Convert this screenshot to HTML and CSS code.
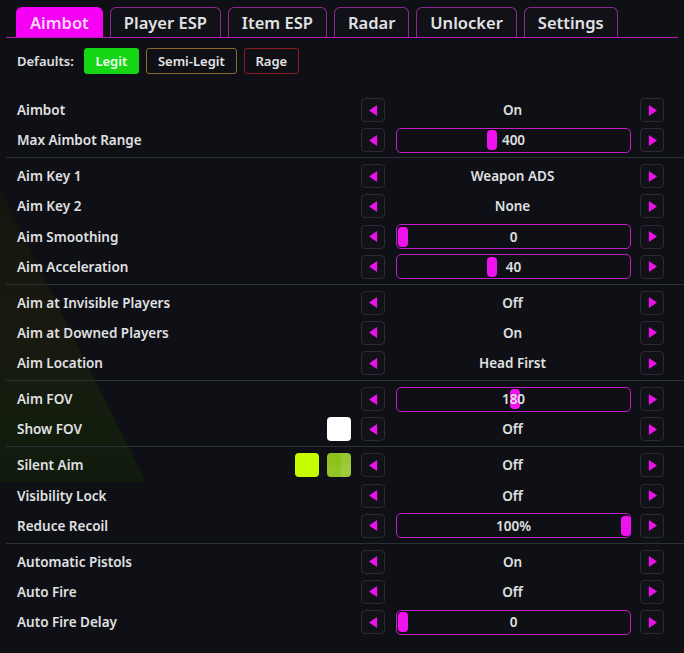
FILE: index.html
```html
<!DOCTYPE html>
<html lang="en">
<head>
    <meta charset="UTF-8">
    <title>Aimbot Menu</title>
    <link rel="stylesheet" href="styles.css">
</head>
<body>

    <!-- faint game scene showing through -->
    <div class="backdrop"></div>

    <div class="menu">
        <!-- Tabs -->
        <div class="tabs">
            <a href="#" class="tab active">Aimbot</a>
            <a href="#" class="tab">Player ESP</a>
            <a href="#" class="tab">Item ESP</a>
            <a href="#" class="tab">Radar</a>
            <a href="#" class="tab">Unlocker</a>
            <a href="#" class="tab">Settings</a>
        </div>

        <!-- Presets -->
        <div class="defaults">
            <span class="defaults-label">Defaults:</span>
            <button class="preset legit">Legit</button>
            <button class="preset semi">Semi-Legit</button>
            <button class="preset rage">Rage</button>
        </div>

        <div class="options">
            <div class="row">
                <span class="label">Aimbot</span><span></span>
                <button class="arrow left"><svg viewBox="0 0 10 12"><polygon points="0,6 9,0 9,12"/></svg></button>
                <div class="value">On</div>
                <button class="arrow right"><svg viewBox="0 0 10 12"><polygon points="10,6 1,0 1,12"/></svg></button>
            </div>
            <div class="row">
                <span class="label">Max Aimbot Range</span><span></span>
                <button class="arrow left"><svg viewBox="0 0 10 12"><polygon points="0,6 9,0 9,12"/></svg></button>
                <div class="value"><div class="slider"><span class="thumb" style="left: calc(0.4 * (100% - 10px))"></span><span class="slider-text">400</span></div></div>
                <button class="arrow right"><svg viewBox="0 0 10 12"><polygon points="10,6 1,0 1,12"/></svg></button>
            </div>

            <hr>

            <div class="row">
                <span class="label">Aim Key 1</span><span></span>
                <button class="arrow left"><svg viewBox="0 0 10 12"><polygon points="0,6 9,0 9,12"/></svg></button>
                <div class="value">Weapon ADS</div>
                <button class="arrow right"><svg viewBox="0 0 10 12"><polygon points="10,6 1,0 1,12"/></svg></button>
            </div>
            <div class="row">
                <span class="label">Aim Key 2</span><span></span>
                <button class="arrow left"><svg viewBox="0 0 10 12"><polygon points="0,6 9,0 9,12"/></svg></button>
                <div class="value">None</div>
                <button class="arrow right"><svg viewBox="0 0 10 12"><polygon points="10,6 1,0 1,12"/></svg></button>
            </div>
            <div class="row">
                <span class="label">Aim Smoothing</span><span></span>
                <button class="arrow left"><svg viewBox="0 0 10 12"><polygon points="0,6 9,0 9,12"/></svg></button>
                <div class="value"><div class="slider"><span class="thumb" style="left: 0"></span><span class="slider-text">0</span></div></div>
                <button class="arrow right"><svg viewBox="0 0 10 12"><polygon points="10,6 1,0 1,12"/></svg></button>
            </div>
            <div class="row">
                <span class="label">Aim Acceleration</span><span></span>
                <button class="arrow left"><svg viewBox="0 0 10 12"><polygon points="0,6 9,0 9,12"/></svg></button>
                <div class="value"><div class="slider"><span class="thumb" style="left: calc(0.4 * (100% - 10px))"></span><span class="slider-text">40</span></div></div>
                <button class="arrow right"><svg viewBox="0 0 10 12"><polygon points="10,6 1,0 1,12"/></svg></button>
            </div>

            <hr>

            <div class="row">
                <span class="label">Aim at Invisible Players</span><span></span>
                <button class="arrow left"><svg viewBox="0 0 10 12"><polygon points="0,6 9,0 9,12"/></svg></button>
                <div class="value">Off</div>
                <button class="arrow right"><svg viewBox="0 0 10 12"><polygon points="10,6 1,0 1,12"/></svg></button>
            </div>
            <div class="row">
                <span class="label">Aim at Downed Players</span><span></span>
                <button class="arrow left"><svg viewBox="0 0 10 12"><polygon points="0,6 9,0 9,12"/></svg></button>
                <div class="value">On</div>
                <button class="arrow right"><svg viewBox="0 0 10 12"><polygon points="10,6 1,0 1,12"/></svg></button>
            </div>
            <div class="row">
                <span class="label">Aim Location</span><span></span>
                <button class="arrow left"><svg viewBox="0 0 10 12"><polygon points="0,6 9,0 9,12"/></svg></button>
                <div class="value">Head First</div>
                <button class="arrow right"><svg viewBox="0 0 10 12"><polygon points="10,6 1,0 1,12"/></svg></button>
            </div>

            <hr>

            <div class="row">
                <span class="label">Aim FOV</span><span></span>
                <button class="arrow left"><svg viewBox="0 0 10 12"><polygon points="0,6 9,0 9,12"/></svg></button>
                <div class="value"><div class="slider"><span class="thumb" style="left: calc(0.5 * (100% - 10px))"></span><span class="slider-text">180</span></div></div>
                <button class="arrow right"><svg viewBox="0 0 10 12"><polygon points="10,6 1,0 1,12"/></svg></button>
            </div>
            <div class="row">
                <span class="label">Show FOV</span>
                <div class="swatches"><span class="swatch white"></span></div>
                <button class="arrow left"><svg viewBox="0 0 10 12"><polygon points="0,6 9,0 9,12"/></svg></button>
                <div class="value">Off</div>
                <button class="arrow right"><svg viewBox="0 0 10 12"><polygon points="10,6 1,0 1,12"/></svg></button>
            </div>

            <hr>

            <div class="row">
                <span class="label">Silent Aim</span>
                <div class="swatches"><span class="swatch lime"></span><span class="swatch lime-alpha"></span></div>
                <button class="arrow left"><svg viewBox="0 0 10 12"><polygon points="0,6 9,0 9,12"/></svg></button>
                <div class="value">Off</div>
                <button class="arrow right"><svg viewBox="0 0 10 12"><polygon points="10,6 1,0 1,12"/></svg></button>
            </div>
            <div class="row">
                <span class="label">Visibility Lock</span><span></span>
                <button class="arrow left"><svg viewBox="0 0 10 12"><polygon points="0,6 9,0 9,12"/></svg></button>
                <div class="value">Off</div>
                <button class="arrow right"><svg viewBox="0 0 10 12"><polygon points="10,6 1,0 1,12"/></svg></button>
            </div>
            <div class="row">
                <span class="label">Reduce Recoil</span><span></span>
                <button class="arrow left"><svg viewBox="0 0 10 12"><polygon points="0,6 9,0 9,12"/></svg></button>
                <div class="value"><div class="slider"><span class="thumb" style="left: calc(100% - 10px)"></span><span class="slider-text">100%</span></div></div>
                <button class="arrow right"><svg viewBox="0 0 10 12"><polygon points="10,6 1,0 1,12"/></svg></button>
            </div>

            <hr>

            <div class="row">
                <span class="label">Automatic Pistols</span><span></span>
                <button class="arrow left"><svg viewBox="0 0 10 12"><polygon points="0,6 9,0 9,12"/></svg></button>
                <div class="value">On</div>
                <button class="arrow right"><svg viewBox="0 0 10 12"><polygon points="10,6 1,0 1,12"/></svg></button>
            </div>
            <div class="row">
                <span class="label">Auto Fire</span><span></span>
                <button class="arrow left"><svg viewBox="0 0 10 12"><polygon points="0,6 9,0 9,12"/></svg></button>
                <div class="value">Off</div>
                <button class="arrow right"><svg viewBox="0 0 10 12"><polygon points="10,6 1,0 1,12"/></svg></button>
            </div>
            <div class="row">
                <span class="label">Auto Fire Delay</span><span></span>
                <button class="arrow left"><svg viewBox="0 0 10 12"><polygon points="0,6 9,0 9,12"/></svg></button>
                <div class="value"><div class="slider"><span class="thumb" style="left: 0"></span><span class="slider-text">0</span></div></div>
                <button class="arrow right"><svg viewBox="0 0 10 12"><polygon points="10,6 1,0 1,12"/></svg></button>
            </div>
        </div>
    </div>

</body>
</html>
```

FILE: styles.css
```css
body {
    margin: 0;
    padding: 0;
    background-color: #0e1015;
    font-family: "Noto Sans", "Open Sans", sans-serif;
    font-weight: 600;
    color: #e0e0e2;
    height: 653px;
    overflow: hidden;
    position: relative;
}

/* Background art bleeding through the menu */
.backdrop {
    position: absolute;
    left: 0;
    top: 190px;
    width: 146px;
    height: 292px;
    clip-path: polygon(0 0, 100% 100%, 0 100%);
    background: linear-gradient(to bottom, #15150f 0%, #19190f 50%, #131d0e 78%, #111b0d 100%);
    z-index: 0;
}

.menu {
    position: relative;
    z-index: 1;
    padding: 7px 0 0 6px;
}

/* Tabs Section */
.tabs {
    display: flex;
    gap: 7px;
    padding-left: 10px;
    margin-right: 6px;
    border-bottom: 1.5px solid #b51cb8;
}

.tab {
    height: 29px;
    line-height: 29px;
    padding: 0 13px;
    font-size: 16.5px;
    color: #e2e2e4;
    text-decoration: none;
    background-color: #111217;
    border: 1.5px solid #8e2790;
    border-bottom: none;
    border-radius: 6px 6px 0 0;
}

.tab.active {
    background-color: #f500f5;
    border-color: #f500f5;
    color: #fbd8fb;
}

/* Defaults row */
.defaults {
    display: flex;
    align-items: center;
    gap: 7px;
    margin-top: 10px;
    padding-left: 11px;
}

.defaults-label {
    font-size: 13px;
    margin-right: 3px;
}

.preset {
    height: 26px;
    padding: 0 10px;
    font-family: inherit;
    font-weight: 600;
    font-size: 13px;
    color: #e4e4e4;
    background-color: transparent;
    border: 1px solid #444;
    border-radius: 3px;
}

.preset.legit {
    background-color: #16d716;
    border-color: #16d716;
    color: #f2fff2;
    width: 55px;
}

.preset.semi {
    border-color: #8c6a2c;
    width: 91px;
}

.preset.rage {
    border-color: #8a1d24;
    width: 55px;
}

/* Option rows */
.options {
    margin-top: 21px;
}

.options hr {
    margin: 2px 0 3px;
    border: 0;
    border-top: 1px solid #2d3037;
}

.row {
    display: grid;
    grid-template-columns: 1fr auto 24px 255px 24px;
    align-items: center;
    height: 30.125px;
    padding: 0 20px 0 11px;
}

.label {
    font-size: 13.5px;
}

.swatches {
    display: flex;
    gap: 8px;
    margin-right: 10px;
}

.swatch {
    width: 24px;
    height: 24px;
    border-radius: 4px;
}

.swatch.white {
    background-color: #ffffff;
}

.swatch.lime {
    background-color: #c6fb00;
}

.swatch.lime-alpha {
    background-color: #8cc21a;
    background-image:
        linear-gradient(to right, transparent 58%, rgba(255,255,255,0.10) 58%),
        linear-gradient(to bottom, transparent 50%, rgba(255,255,255,0.05) 50%);
}

.arrow {
    width: 24px;
    height: 24px;
    padding: 0;
    display: flex;
    align-items: center;
    justify-content: center;
    background-color: #111217;
    border: 1px solid #2a2c32;
    border-radius: 4px;
}

.arrow svg {
    width: 9px;
    height: 11px;
    fill: #ec12ec;
}

.value {
    text-align: center;
    font-size: 13.5px;
}

.slider {
    position: relative;
    height: 25px;
    margin: 0 9px 0 11px;
    border: 1.5px solid #c51dc8;
    border-radius: 5px;
    box-sizing: border-box;
    display: flex;
    align-items: center;
    justify-content: center;
}

.thumb {
    position: absolute;
    top: 50%;
    transform: translateY(-50%);
    width: 10px;
    height: 20px;
    margin-left: 1px;
    background-color: #ef12ef;
    border-radius: 4px;
}

.slider-text {
    position: relative;
}
```
